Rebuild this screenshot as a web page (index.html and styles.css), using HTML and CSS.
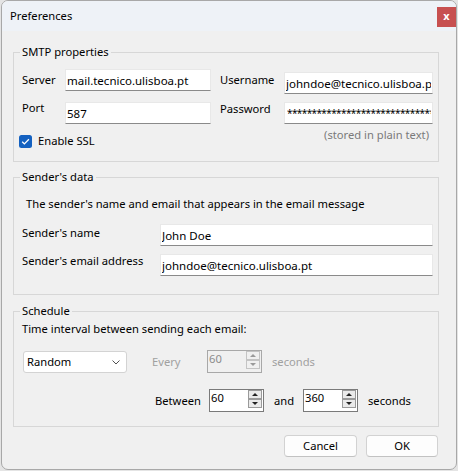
FILE: index.html
```html
<!DOCTYPE html>
<html>
<head>
<meta charset="utf-8">
<title>Preferences</title>
<link rel="stylesheet" href="styles.css">
</head>
<body>
<div class="window">
  <div class="titlebar">
    <span class="title">Preferences</span>
    <span class="close">x</span>
  </div>
  <div class="content">
    <fieldset class="group smtp">
      <legend>SMTP properties</legend>
      <div class="smtp-grid">
        <label class="lbl l-server">Server</label>
        <input class="field f-server" value="mail.tecnico.ulisboa.pt">
        <label class="lbl l-user">Username</label>
        <input class="field f-user" value="johndoe@tecnico.ulisboa.pt">
        <label class="lbl l-port">Port</label>
        <input class="field f-port" value="587">
        <label class="lbl l-pass">Password</label>
        <input class="field f-pass" value="******************************">
        <div class="ssl">
          <svg class="check" width="13" height="13" viewBox="0 0 13 13"><rect width="13" height="13" rx="2.5" fill="#1461c0"/><path d="M3.2 6.7 L5.4 8.9 L9.9 4.3" fill="none" stroke="#fff" stroke-width="1.3"/></svg>
          <span>Enable SSL</span>
        </div>
        <div class="note">(stored in plain text)</div>
      </div>
    </fieldset>

    <fieldset class="group sender">
      <legend>Sender's data</legend>
      <div class="desc">The sender's name and email that appears in the email message</div>
      <div class="sender-grid">
        <label class="lbl l-name">Sender's name</label>
        <input class="field" value="John Doe">
        <label class="lbl l-email">Sender's email address</label>
        <input class="field" value="johndoe@tecnico.ulisboa.pt">
      </div>
    </fieldset>

    <fieldset class="group schedule">
      <legend>Schedule</legend>
      <div class="sched-desc">Time interval between sending each email:</div>
      <div class="sched-row r1">
        <div class="combo">
          <span>Random</span>
          <svg width="8" height="5" viewBox="0 0 8 5"><path d="M0.5 0.5 L4 4 L7.5 0.5" stroke="#505050" fill="none"/></svg>
        </div>
        <span class="dim every">Every</span>
        <div class="spin disabled">
          <span class="spin-val">60</span>
          <span class="spin-btns"><span class="sb up"></span><span class="sb down"></span></span>
        </div>
        <span class="dim secs">seconds</span>
      </div>
      <div class="sched-row r2">
        <span class="between">Between</span>
        <div class="spin">
          <span class="spin-val">60</span>
          <span class="spin-btns"><span class="sb up"></span><span class="sb down"></span></span>
        </div>
        <span class="and">and</span>
        <div class="spin">
          <span class="spin-val">360</span>
          <span class="spin-btns"><span class="sb up"></span><span class="sb down"></span></span>
        </div>
        <span class="secs2">seconds</span>
      </div>
    </fieldset>

    <div class="buttons">
      <button class="btn cancel">Cancel</button>
      <button class="btn ok">OK</button>
    </div>
  </div>
</div>
</body>
</html>
```

FILE: styles.css
```css
* { box-sizing: border-box; }
html, body { margin: 0; padding: 0; }
body {
  background: #e4e4e4;
  width: 458px;
  height: 471px;
  overflow: hidden;
  font-family: "Noto Sans", "Open Sans", sans-serif;
  font-size: 11.2px;
  line-height: 16px;
  color: #000;
}
.window {
  margin-left: 1px;
  width: 456px;
  height: 470px;
  border: 1px solid #a8a8a8;
  border-radius: 7px;
  background: #f0f0f0;
  overflow: hidden;
  display: flex;
  flex-direction: column;
}
.titlebar {
  height: 30px;
  flex-shrink: 0;
  background: #eef2f7;
  display: flex;
  align-items: flex-start;
}
.title { margin: 7px 0 0 8px; }
.close {
  margin-left: auto;
  margin-top: 6px;
  width: 19px;
  height: 20px;
  background: #c75050;
  color: #fff;
  font-weight: bold;
  font-size: 11px;
  line-height: 18px;
  text-align: center;
}
.content {
  padding: 13px 17px 0 11px;
  display: flex;
  flex-direction: column;
}
.group {
  margin: 0;
  min-width: 0;
  border: 1px solid #d7d7d7;
  padding: 0 5px 0 8px;
}
.group legend {
  padding: 0 2px;
  margin-left: -2px;
  line-height: 16px;
}
.field {
  font: inherit;
  font-size: 11.5px;
  line-height: 16px;
  height: 22px;
  width: 100%;
  margin: 0;
  padding: 0 1px;
  border: 1px solid #e8e8e8;
  border-bottom-color: #8a8a8a;
  background: #fff;
  color: #000;
  outline: none;
}
.lbl { display: block; }

/* SMTP */
.smtp { padding-top: 9px; padding-bottom: 12px; }
.smtp-grid {
  display: grid;
  grid-template-columns: 43px 146px 73px 149px;
  grid-template-rows: 25px 30px 25px;
  align-items: start;
}
.l-server { margin-top: 3px; }
.l-user { margin-top: 3px; padding-left: 9px; }
.f-user { margin-top: 3px; }
.l-port, .f-port, .l-pass, .f-pass { grid-row: 2; }
.l-port { margin-top: 6px; }
.f-port { margin-top: 8px; }
.l-pass { margin-top: 7px; padding-left: 9px; }
.f-pass {
  margin-top: 8px;
  font-size: 10px;
  letter-spacing: -0.6px;
  padding-left: 2px;
}
.ssl {
  grid-row: 3;
  grid-column: 1 / 3;
  margin-top: 9px;
  margin-left: -3px;
  display: flex;
  align-items: center;
  gap: 6px;
}
.check { display: block; }
.note {
  grid-row: 3;
  grid-column: 3 / 5;
  justify-self: end;
  margin-top: 3px;
  margin-right: 4px;
  color: #7a7a7a;
}

/* Sender */
.sender { margin-top: 7px; padding-top: 11px; padding-bottom: 18px; }
.desc { margin-left: 4px; }
.sender-grid {
  margin-top: 12px;
  display: grid;
  grid-template-columns: 138px 1fr;
  grid-template-rows: 22px 22px;
  row-gap: 8px;
  align-items: start;
}
.l-name { margin-top: 1px; }
.l-email { margin-top: -1px; }

/* Schedule */
.schedule { margin-top: 8px; padding-top: 2px; padding-bottom: 14px; }
.sched-row {
  display: flex;
  align-items: center;
  height: 23px;
}
.r1 { margin-top: 13px; }
.r2 { margin-top: 16px; }
.combo {
  align-self: flex-end;
  margin-left: 1px;
  width: 104px;
  height: 22px;
  background: #fff;
  border: 1px solid #d3d3d3;
  border-radius: 3px;
  display: flex;
  align-items: center;
  justify-content: space-between;
  padding: 0 6px 0 3px;
}
.combo svg { display: block; }
.dim { color: #a0a0a0; }
.every { margin-left: 25px; width: 55px; }
.secs { margin-left: 10px; }
.between { margin-left: 133px; width: 54px; }
.and { margin-left: 10px; width: 29px; }
.secs2 { margin-left: 10px; }
.spin {
  width: 55px;
  height: 23px;
  background: #fff;
  border: 1px solid #7a7a7a;
  display: flex;
  align-items: flex-start;
  padding-left: 1px;
}
.spin-val { margin-top: 0; }
.spin.disabled { background: #f0f0f0; border-color: #a8a8a8; color: #8c8c8c; }
.spin-btns {
  margin-left: auto;
  margin-right: 1px;
  display: flex;
  flex-direction: column;
}
.sb {
  width: 14px;
  height: 9px;
  border: 1px solid #9a9a9a;
  background: #eaeaea;
  display: flex;
  align-items: center;
  justify-content: center;
}
.sb::after {
  content: "";
  width: 0;
  height: 0;
  border-left: 3px solid transparent;
  border-right: 3px solid transparent;
}
.up::after { border-bottom: 3px solid #222; }
.down::after { border-top: 3px solid #222; }
.disabled .sb { border-color: #c4c4c4; background: #f0f0f0; }
.disabled .up::after { border-bottom-color: #9a9a9a; }
.disabled .down::after { border-top-color: #9a9a9a; }

/* Buttons */
.buttons {
  display: flex;
  justify-content: flex-end;
  gap: 9px;
  margin-top: 8px;
  padding-right: 1px;
}
.btn {
  font: inherit;
  line-height: 16px;
  height: 22px;
  width: 73px;
  padding: 0;
  border: 1px solid #d2d2d2;
  border-bottom-color: #c2c2c2;
  border-radius: 4px;
  background: #fdfdfd;
  color: #000;
}
.btn.ok { width: 72px; }
```
